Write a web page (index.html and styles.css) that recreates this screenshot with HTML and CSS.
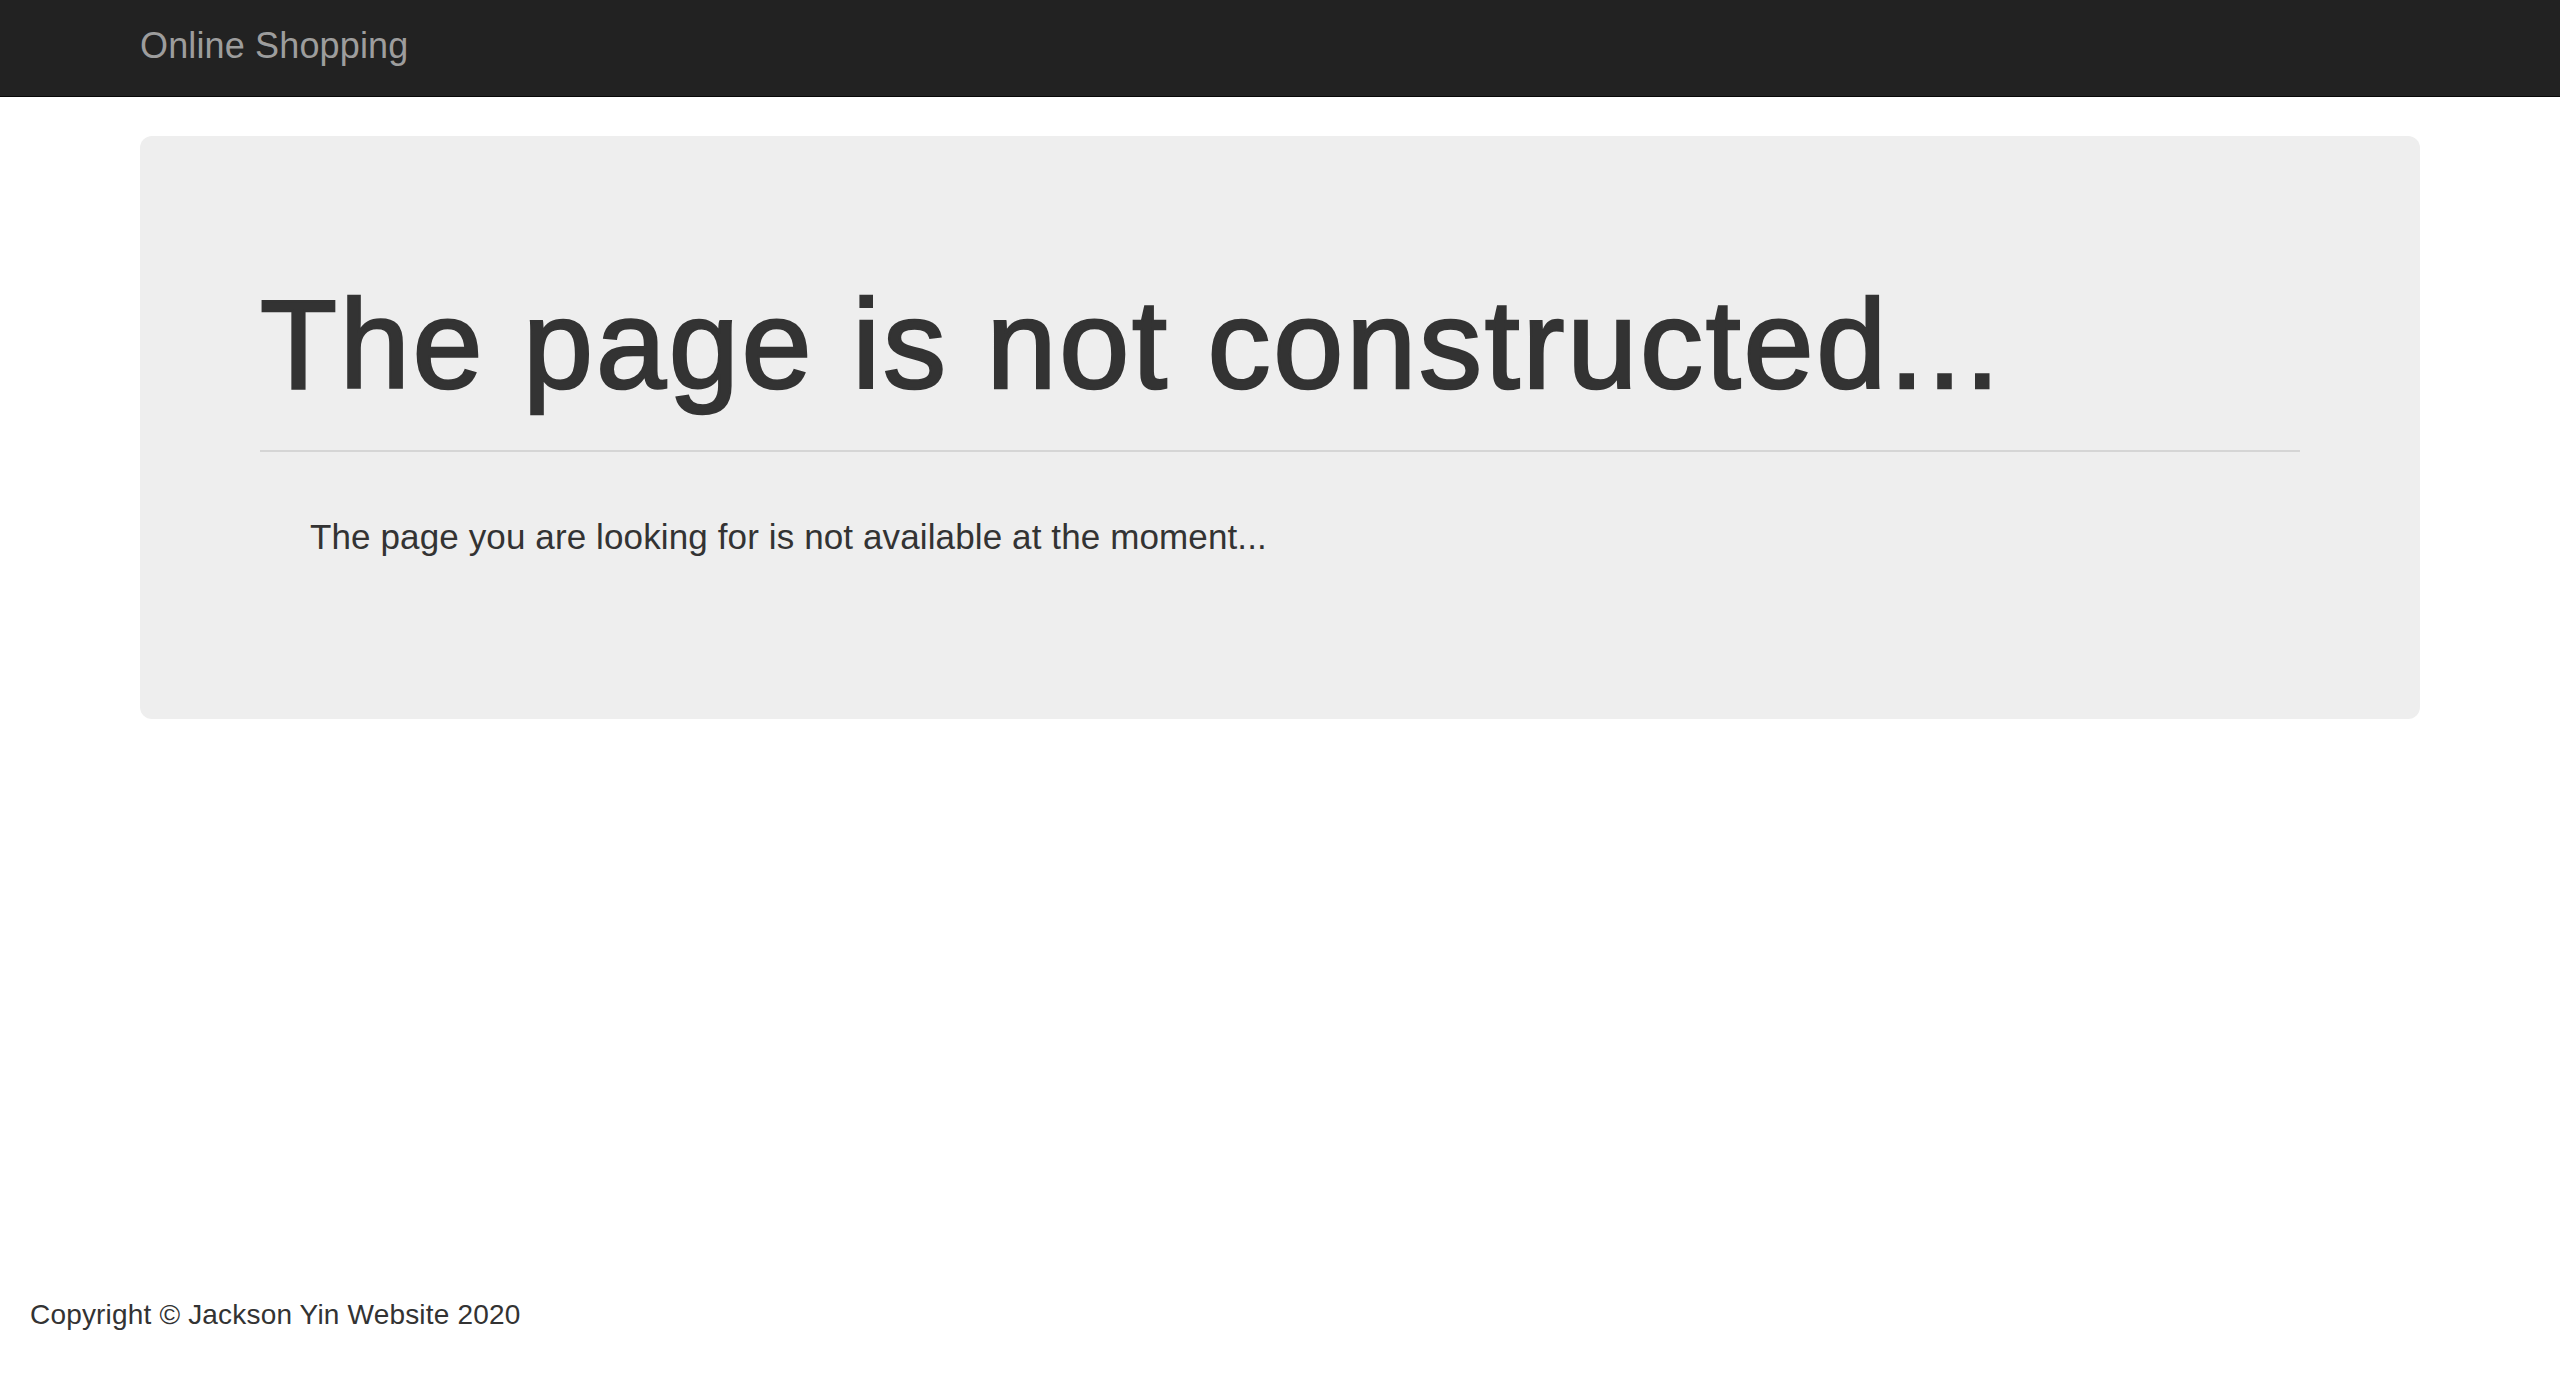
FILE: index.html
```html
<!DOCTYPE html>
<html lang="en">
<head>
<meta charset="utf-8">
<title>Online Shopping</title>
<link rel="stylesheet" href="styles.css">
</head>
<body>
<div class="page">
  <nav class="navbar">
    <div class="nav-container">
      <a class="brand" href="#">Online Shopping</a>
    </div>
  </nav>
  <main class="container">
    <section class="jumbotron">
      <h1 class="title">The page is not constructed...</h1>
      <hr class="divider">
      <p class="lead">The page you are looking for is not available at the moment...</p>
    </section>
  </main>
  <footer class="footer">
    <p class="copyright">Copyright &copy; Jackson Yin Website 2020</p>
  </footer>
</div>
</body>
</html>
```
FILE: styles.css
```css
* { box-sizing: border-box; }

html, body {
  margin: 0;
  padding: 0;
  background: #ffffff;
  color: #333333;
  font-family: "Liberation Sans", Arial, Helvetica, sans-serif;
}

.page {
  min-height: 100vh;
  display: flex;
  flex-direction: column;
}

.navbar {
  background: #222222;
  border-bottom: 1px solid #080808;
  margin-bottom: 39px;
}

.nav-container {
  width: 2340px;
  margin: 0 auto;
  padding: 0 30px;
  height: 96px;
}

.brand {
  display: inline-block;
  color: #9d9d9d;
  font-size: 36px;
  line-height: 40px;
  padding-top: 26px;
  letter-spacing: 0.15px;
  text-decoration: none;
}

.container {
  width: 2340px;
  margin: 0 auto;
  padding: 0 30px;
}

.jumbotron {
  background: #eeeeee;
  border-radius: 12px;
  padding: 139px 120px 96px;
  height: 583px;
}

.title {
  margin: 0;
  font-size: 126px;
  line-height: 139px;
  font-weight: 400;
  letter-spacing: 2.75px;
  -webkit-text-stroke: 2.5px #333333;
  color: #333333;
}

.divider {
  margin: 36px 0 0;
  border: 0;
  border-top: 2px solid #d5d5d5;
  height: 0;
}

.lead {
  margin: 60px 0 0;
  padding-left: 50px;
  font-size: 35px;
  line-height: 49px;
  letter-spacing: 0.12px;
  font-weight: 400;
}

.footer {
  margin-top: auto;
  padding: 0 30px 39px;
}

.copyright {
  margin: 0;
  font-size: 28px;
  line-height: 40px;
  letter-spacing: 0.18px;
}
```
